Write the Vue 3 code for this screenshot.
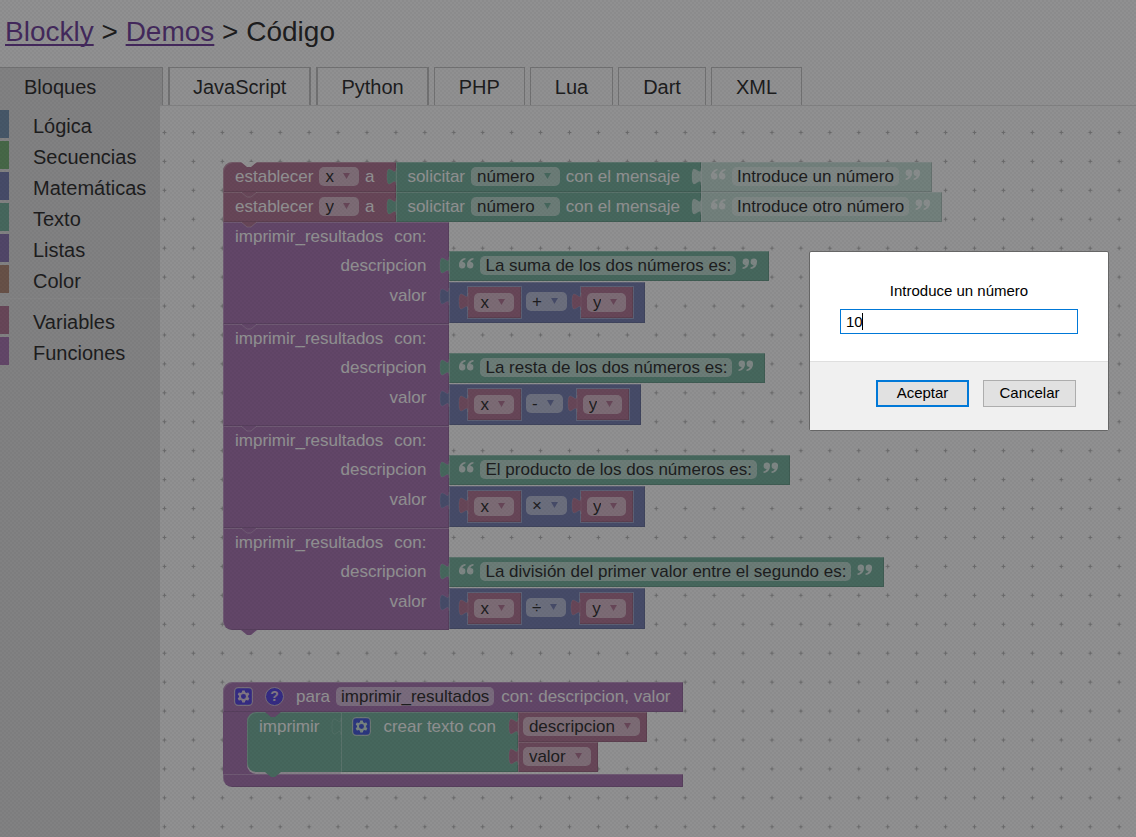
<script setup>
import { ref } from 'vue'

const tabs = [
  { name: 'JavaScript', thick: true },
  { name: 'Python', thick: true },
  { name: 'PHP' },
  { name: 'Lua' },
  { name: 'Dart' },
  { name: 'XML' },
]

const groups = [
  [
    { name: 'Lógica', kind: 'logic' },
    { name: 'Secuencias', kind: 'loops' },
    { name: 'Matemáticas', kind: 'math' },
    { name: 'Texto', kind: 'text' },
    { name: 'Listas', kind: 'lists' },
    { name: 'Color', kind: 'colour' },
  ],
  [
    { name: 'Variables', kind: 'vars' },
    { name: 'Funciones', kind: 'procs' },
  ],
]

const setters = ref([
  { variable: 'x', message: 'Introduce un número' },
  { variable: 'y', message: 'Introduce otro número' },
])

const calls = ref([
  { text: 'La suma de los dos números es:', op: '+' },
  { text: 'La resta de los dos números es:', op: '-' },
  { text: 'El producto de los dos números es:', op: '×' },
  { text: 'La división del primer valor entre el segundo es:', op: '÷' },
])

const procName = ref('imprimir_resultados')
const joined = ['descripcion', 'valor']
const answer = ref('10')

const tabPath = 'M8 15c0-10-8 8-8-7.500s8 2.500 8-7.500z'
const quotePath =
  'M6.500 0C2 0.500 0 3.500 0 7A3.200 3.200 0 1 0 3.400 4C3.600 3 4.600 2 6.500 1.500zM14.500 0C10 0.500 8 3.500 8 7A3.200 3.200 0 1 0 11.400 4C11.600 3 12.600 2 14.500 1.500z'
const gearPath =
  'm4.203,7.296 0,1.368 -0.92,0.677 -0.11,0.41 0.9,1.559 0.41,0.11 1.043,-0.457 1.187,0.683 0.127,1.134 0.3,0.3 1.8,0 0.3,-0.299 0.127,-1.138 1.185,-0.682 1.046,0.458 0.409,-0.11 0.9,-1.559 -0.11,-0.41 -0.92,-0.677 0,-1.366 0.92,-0.677 0.11,-0.41 -0.9,-1.559 -0.409,-0.109 -1.046,0.458 -1.185,-0.682 -0.127,-1.138 -0.3,-0.299 -1.8,0 -0.3,0.3 -0.126,1.135 -1.187,0.682 -1.043,-0.457 -0.41,0.11 -0.899,1.559 0.108,0.409z'
</script>

<template>
  <div class="page">
    <h1 class="crumbs"><a href="#blockly">Blockly</a> &gt; <a href="#demos">Demos</a> &gt; Código</h1>

    <nav class="tabs">
      <button type="button" class="tab on">Bloques</button>
      <button v-for="t in tabs" :key="t.name" type="button" class="tab" :class="{ thick: t.thick }">{{ t.name }}</button>
    </nav>

    <div class="main">
      <aside class="toolbox">
        <div v-for="(g, i) in groups" :key="i" class="group">
          <button v-for="c in g" :key="c.name" type="button" class="category" :class="c.kind">{{ c.name }}</button>
        </div>
      </aside>

      <main class="workspace">
        <svg class="grid" aria-hidden="true">
          <defs>
            <pattern id="dots" width="20" height="20" patternUnits="userSpaceOnUse" patternTransform="translate(-10 12) scale(1.4465)">
              <path d="M8.700 10h2.600M10 8.700v2.600" stroke="#aaa" stroke-width="0.800" />
            </pattern>
          </defs>
          <rect width="100%" height="100%" fill="url(#dots)" />
        </svg>

        <section class="stack">
          <div v-for="(s, i) in setters" :key="s.variable" class="row">
            <div class="block vars setter" :class="{ first: i === 0 }">
              <svg v-if="i === 0" class="notch hollow" viewBox="0 0 16 5"><path d="M0 0L6 5H10L16 0z" /></svg>
              <span>establecer</span>
              <label class="drop">
                <select aria-label="variable"><option>{{ s.variable }}</option></select>
                <svg viewBox="0 0 8 7"><path d="M0 0H8L4 7z" /></svg>
              </label>
              <span>a</span>
              <svg class="notch below" viewBox="0 0 16 5"><path d="M0 0L6 5H10L16 0" /></svg>
            </div>
            <div class="block text prompt">
              <svg class="plug" viewBox="0 0 8 15"><path :d="tabPath" /></svg>
              <span>solicitar</span>
              <label class="drop">
                <select aria-label="tipo"><option>número</option></select>
                <svg viewBox="0 0 8 7"><path d="M0 0H8L4 7z" /></svg>
              </label>
              <span>con el mensaje</span>
            </div>
            <div class="block text shadow quoted">
              <svg class="plug" viewBox="0 0 8 15"><path :d="tabPath" /></svg>
              <svg class="quote" viewBox="0 0 15 11"><path :d="quotePath" /></svg>
              <input v-model="s.message" class="field" type="text" aria-label="mensaje" />
              <svg class="quote close" viewBox="0 0 15 11"><path :d="quotePath" /></svg>
            </div>
          </div>

          <div v-for="(c, i) in calls" :key="c.op" class="row call-row">
            <div class="block procs call" :class="{ last: i === calls.length - 1 }">
              <div class="call-head"><span>imprimir_resultados</span><span>con:</span></div>
              <span>descripcion</span>
              <span>valor</span>
              <svg class="notch below" viewBox="0 0 16 5"><path d="M0 0L6 5H10L16 0" /></svg>
            </div>
            <div class="args">
              <div class="block text quoted">
                <svg class="plug" viewBox="0 0 8 15"><path :d="tabPath" /></svg>
                <svg class="quote" viewBox="0 0 15 11"><path :d="quotePath" /></svg>
                <input v-model="c.text" class="field" type="text" aria-label="descripcion" />
                <svg class="quote close" viewBox="0 0 15 11"><path :d="quotePath" /></svg>
              </div>
              <div class="block math sum">
                <svg class="plug" viewBox="0 0 8 15"><path :d="tabPath" /></svg>
                <div class="block vars inner">
                  <svg class="plug" viewBox="0 0 8 15"><path :d="tabPath" /></svg>
                  <label class="drop">
                    <select aria-label="primer operando"><option>x</option></select>
                    <svg viewBox="0 0 8 7"><path d="M0 0H8L4 7z" /></svg>
                  </label>
                </div>
                <label class="drop">
                  <select aria-label="operación"><option>{{ c.op }}</option></select>
                  <svg viewBox="0 0 8 7"><path d="M0 0H8L4 7z" /></svg>
                </label>
                <div class="block vars inner second">
                  <svg class="plug" viewBox="0 0 8 15"><path :d="tabPath" /></svg>
                  <label class="drop">
                    <select aria-label="segundo operando"><option>y</option></select>
                    <svg viewBox="0 0 8 7"><path d="M0 0H8L4 7z" /></svg>
                  </label>
                </div>
              </div>
            </div>
          </div>
        </section>

        <section class="definition">
          <div class="block procs def-head">
            <button type="button" class="icon" aria-label="Configurar función">
              <svg viewBox="0 0 16 16">
                <rect class="badge" x="0.500" y="0.500" width="15" height="15" rx="3" />
                <path class="mark" :d="gearPath" /><circle class="hole" cx="8" cy="8" r="2.100" />
              </svg>
            </button>
            <button type="button" class="icon help" aria-label="Comentario">?</button>
            <span>para</span>
            <input v-model="procName" class="field" type="text" aria-label="nombre de la función" />
            <span>con: descripcion, valor</span>
          </div>
          <div class="def-body">
            <div class="block text print">
              <svg class="notch purple" viewBox="0 0 16 5"><path d="M0 0L6 5H10L16 0z" /></svg>
              <span>imprimir</span>
              <svg class="notch below" viewBox="0 0 16 5"><path d="M0 0L6 5H10L16 0" /></svg>
            </div>
            <div class="block text join">
              <svg class="plug" viewBox="0 0 8 15"><path :d="tabPath" /></svg>
              <button type="button" class="icon" aria-label="Configurar texto">
                <svg viewBox="0 0 16 16">
                  <rect class="badge" x="0.500" y="0.500" width="15" height="15" rx="3" />
                  <path class="mark" :d="gearPath" /><circle class="hole" cx="8" cy="8" r="2.100" />
                </svg>
              </button>
              <span>crear texto con</span>
            </div>
            <div class="items">
              <div v-for="j in joined" :key="j" class="block vars item">
                <svg class="plug" viewBox="0 0 8 15"><path :d="tabPath" /></svg>
                <label class="drop">
                  <select aria-label="variable"><option>{{ j }}</option></select>
                  <svg viewBox="0 0 8 7"><path d="M0 0H8L4 7z" /></svg>
                </label>
              </div>
            </div>
          </div>
          <div class="block procs def-foot"></div>
        </section>
      </main>
    </div>

    <div class="veil"></div>

    <form class="dialog" role="dialog" @submit.prevent>
      <div class="dialog-body">
        <label for="answer">Introduce un número</label>
        <div class="entry">
          <input id="answer" v-model="answer" type="text" autocomplete="off" />
          <span class="caret"></span>
        </div>
      </div>
      <div class="dialog-foot">
        <button type="submit" class="primary">Aceptar</button>
        <button type="button">Cancelar</button>
      </div>
    </form>
  </div>
</template>

<style>
body {
  margin: 0;
}
</style>

<style scoped>
.page {
  position: relative;
  display: flex;
  flex-direction: column;
  min-height: 100vh;
  overflow: hidden;
  background: #fff;
  color: #000;
  font-family: "Liberation Sans", Arial, sans-serif;
  font-size: 20px;
}
button,
input,
select {
  font: inherit;
  color: inherit;
  margin: 0;
  box-sizing: border-box;
}
.crumbs {
  margin: 0;
  padding: 16px 5px 19px;
  font-size: 28px;
  font-weight: normal;
  line-height: 32px;
}
.crumbs a {
  color: #551a8b;
  text-decoration-thickness: 2px;
  text-underline-offset: 3px;
  text-decoration-skip-ink: none;
}
.tabs {
  display: flex;
  gap: 5px;
}
.tab {
  height: 38px;
  padding: 0 24px;
  border: 1px solid #bbb;
  border-bottom: 0;
  background: #fff;
  line-height: 38px;
}
.tab.thick {
  border-left-width: 2px;
  border-right-width: 2px;
  padding: 0 23px;
}
.tab.on {
  width: 163px;
  border-left: 0;
  background: #ddd;
  text-align: left;
}
.main {
  display: flex;
  flex: 1;
}
.toolbox {
  width: 160px;
  padding-top: 5px;
  background: #ddd;
}
.group + .group {
  margin-top: 5px;
  padding-top: 7px;
  border-top: 1px solid #e5e5e5;
}
.category {
  display: block;
  width: 100%;
  height: 28px;
  margin-bottom: 3px;
  padding: 0 0 0 24px;
  border: 0;
  border-left: 9px solid var(--c);
  background: none;
  line-height: 32px;
  text-align: left;
}
.logic { --c: #5b80a5; }
.loops { --c: #5ba55b; }
.math { --c: #5b67a5; }
.text { --c: #5ba58c; }
.lists { --c: #745ba5; }
.colour { --c: #a5745b; }
.vars { --c: #a55b80; }
.procs { --c: #995ba5; }
.shadow { --c: #bddbd1; }

.workspace {
  position: relative;
  flex: 1;
  border-top: 1px solid #ddd;
  font-size: 17px;
  line-height: 19px;
}
.grid {
  position: absolute;
  inset: 0;
  width: 100%;
  height: 100%;
}
.stack {
  position: absolute;
  left: 63px;
  top: 56px;
}
.definition {
  position: absolute;
  left: 63px;
  top: 576px;
}
.row {
  display: flex;
}
.block {
  position: relative;
  box-sizing: border-box;
  background: var(--c);
  color: #fff;
  white-space: nowrap;
  box-shadow: inset 1px 1px 0 rgba(255, 255, 255, 0.28), inset -1px -1px 0 rgba(0, 0, 0, 0.15);
}
.plug {
  position: absolute;
  left: -10px;
  top: 6px;
  width: 11px;
  height: 17px;
}
.plug path {
  fill: var(--c);
  stroke: rgba(255, 255, 255, 0.2);
  stroke-width: 0.600;
}
.notch {
  position: absolute;
  left: 18px;
  width: 16px;
  height: 5px;
  z-index: 1;
}
.notch path {
  fill: var(--c);
}
.notch.hollow {
  top: 0;
}
.notch.hollow path {
  fill: #fff;
}
.notch.purple {
  top: 0;
}
.notch.purple path {
  fill: #995ba5;
}
.notch.below {
  top: 100%;
  overflow: visible;
}
.notch.below path {
  stroke: rgba(255, 255, 255, 0.3);
}
.last .notch.below path,
.print .notch.below path {
  stroke: none;
}
.setter,
.prompt,
.quoted,
.item {
  display: flex;
  height: 30px;
  padding-top: 5px;
}
.setter {
  gap: 6px;
  padding-left: 12px;
  padding-right: 22px;
}
.setter.first {
  border-top-left-radius: 9px;
}
.prompt {
  gap: 6px;
  padding-left: 11px;
  padding-right: 21px;
}
.quoted {
  width: max-content;
  gap: 6px;
  padding-left: 10px;
  padding-right: 12px;
}
.quote {
  width: 15px;
  height: 11px;
  margin-top: 2px;
  fill: #fff;
  opacity: 0.75;
}
.quote.close {
  transform: rotate(180deg);
}
.field {
  height: 19px;
  padding: 0 5px;
  border: 0;
  border-radius: 5px;
  background: rgba(255, 255, 255, 0.5);
  color: #000;
  field-sizing: content;
}
.shadow .field {
  background: rgba(255, 255, 255, 0.4);
}
.drop {
  position: relative;
  display: block;
  height: 19px;
}
.drop select {
  display: block;
  height: 19px;
  padding: 0 25px 0 6px;
  border: 0;
  border-radius: 5px;
  appearance: none;
  background: rgba(255, 255, 255, 0.5);
  color: #000;
  line-height: 19px;
  field-sizing: content;
}
.drop svg {
  position: absolute;
  right: 9px;
  top: 6px;
  width: 7px;
  height: 6px;
  fill: var(--c);
  pointer-events: none;
}
.call {
  display: flex;
  flex-direction: column;
  align-items: flex-end;
  gap: 11px;
  height: 102px;
  padding: 5px 23px 0 12px;
}
.call.last {
  border-bottom-left-radius: 9px;
}
.call-head {
  display: flex;
  gap: 11px;
  margin-bottom: -1px;
}
.args {
  padding-top: 29px;
}
.sum {
  display: flex;
  align-items: flex-start;
  gap: 5px;
  width: max-content;
  height: 41px;
  margin-top: 1px;
  padding: 5px 12px 0 19px;
}
.sum > .drop {
  margin-top: 5px;
}
.inner {
  height: 31px;
  padding: 6px 7px 0 6px;
  box-shadow: 0 0 0 1px rgba(255, 255, 255, 0.3), inset -1px -1px 0 rgba(0, 0, 0, 0.15);
}
.inner.second {
  margin-left: 9px;
}
.def-head {
  display: flex;
  height: 30px;
  padding: 5px 12px 0 11px;
  border-top-left-radius: 9px;
}
.def-head .icon {
  margin-right: 12px;
}
.def-head .field {
  margin: 0 7px 0 6px;
}
.icon {
  width: 19px;
  height: 19px;
  padding: 0;
  border: 0;
  background: none;
  opacity: 0.65;
}
.icon svg {
  display: block;
  width: 19px;
  height: 19px;
}
.badge {
  fill: #00f;
  stroke: #ddd;
}
.mark {
  fill: #fff;
}
.hole {
  fill: #00f;
}
.icon.help {
  border: 1px solid #ddd;
  border-radius: 50%;
  background: #00f;
  color: #fff;
  font-size: 14px;
  font-weight: bold;
  line-height: 17px;
  text-align: center;
}
.def-body {
  display: flex;
  width: max-content;
  height: 62px;
  padding-left: 24px;
  background: linear-gradient(#995ba5, #995ba5) no-repeat 0 0 / 34px 100%;
}
.print,
.join {
  height: 60px;
  padding-top: 5px;
}
.print {
  padding-left: 12px;
  padding-right: 22px;
  border-radius: 9px 0 0 9px;
  box-shadow: 0 2px 0 #e6dbe8, inset 1px 1px 0 rgba(255, 255, 255, 0.28);
}
.join {
  display: flex;
  gap: 12px;
  padding-left: 11px;
  padding-right: 22px;
}
.item {
  width: max-content;
  padding-left: 5px;
  padding-right: 7px;
}
.def-foot {
  height: 13px;
  border-bottom-left-radius: 9px;
}

.veil {
  position: absolute;
  inset: 0;
  z-index: 5;
  background:
    repeating-conic-gradient(rgba(0, 0, 0, 0.03) 0 25%, transparent 0 50%) 0 0 / 4px 4px,
    rgba(52, 53, 54, 0.55);
}
.dialog {
  position: absolute;
  z-index: 6;
  top: 251px;
  right: 27px;
  width: 298px;
  border: 1px solid #666;
  border-radius: 2px;
  background: #fff;
  font-size: 15px;
}
.dialog-body {
  display: flex;
  flex-direction: column;
  gap: 9px;
  padding: 29px 30px 27px;
}
.dialog-body label {
  line-height: 19px;
  text-align: center;
}
.entry {
  position: relative;
}
.entry input {
  display: block;
  width: 100%;
  height: 25px;
  padding: 0 5px;
  border: 1px solid #0078d7;
  background: #fff;
}
.caret {
  position: absolute;
  left: 22px;
  top: 4px;
  width: 1px;
  height: 17px;
  background: #000;
}
.dialog-foot {
  display: flex;
  justify-content: flex-end;
  gap: 14px;
  padding: 18px 32px 23px;
  border-top: 1px solid #dfdfdf;
  background: #f0f0f0;
}
.dialog-foot button {
  width: 93px;
  height: 27px;
  padding: 0 0 2px;
  border: 1px solid #adadad;
  background: #e1e1e1;
}
.dialog-foot .primary {
  border: 2px solid #0078d7;
}
</style>
